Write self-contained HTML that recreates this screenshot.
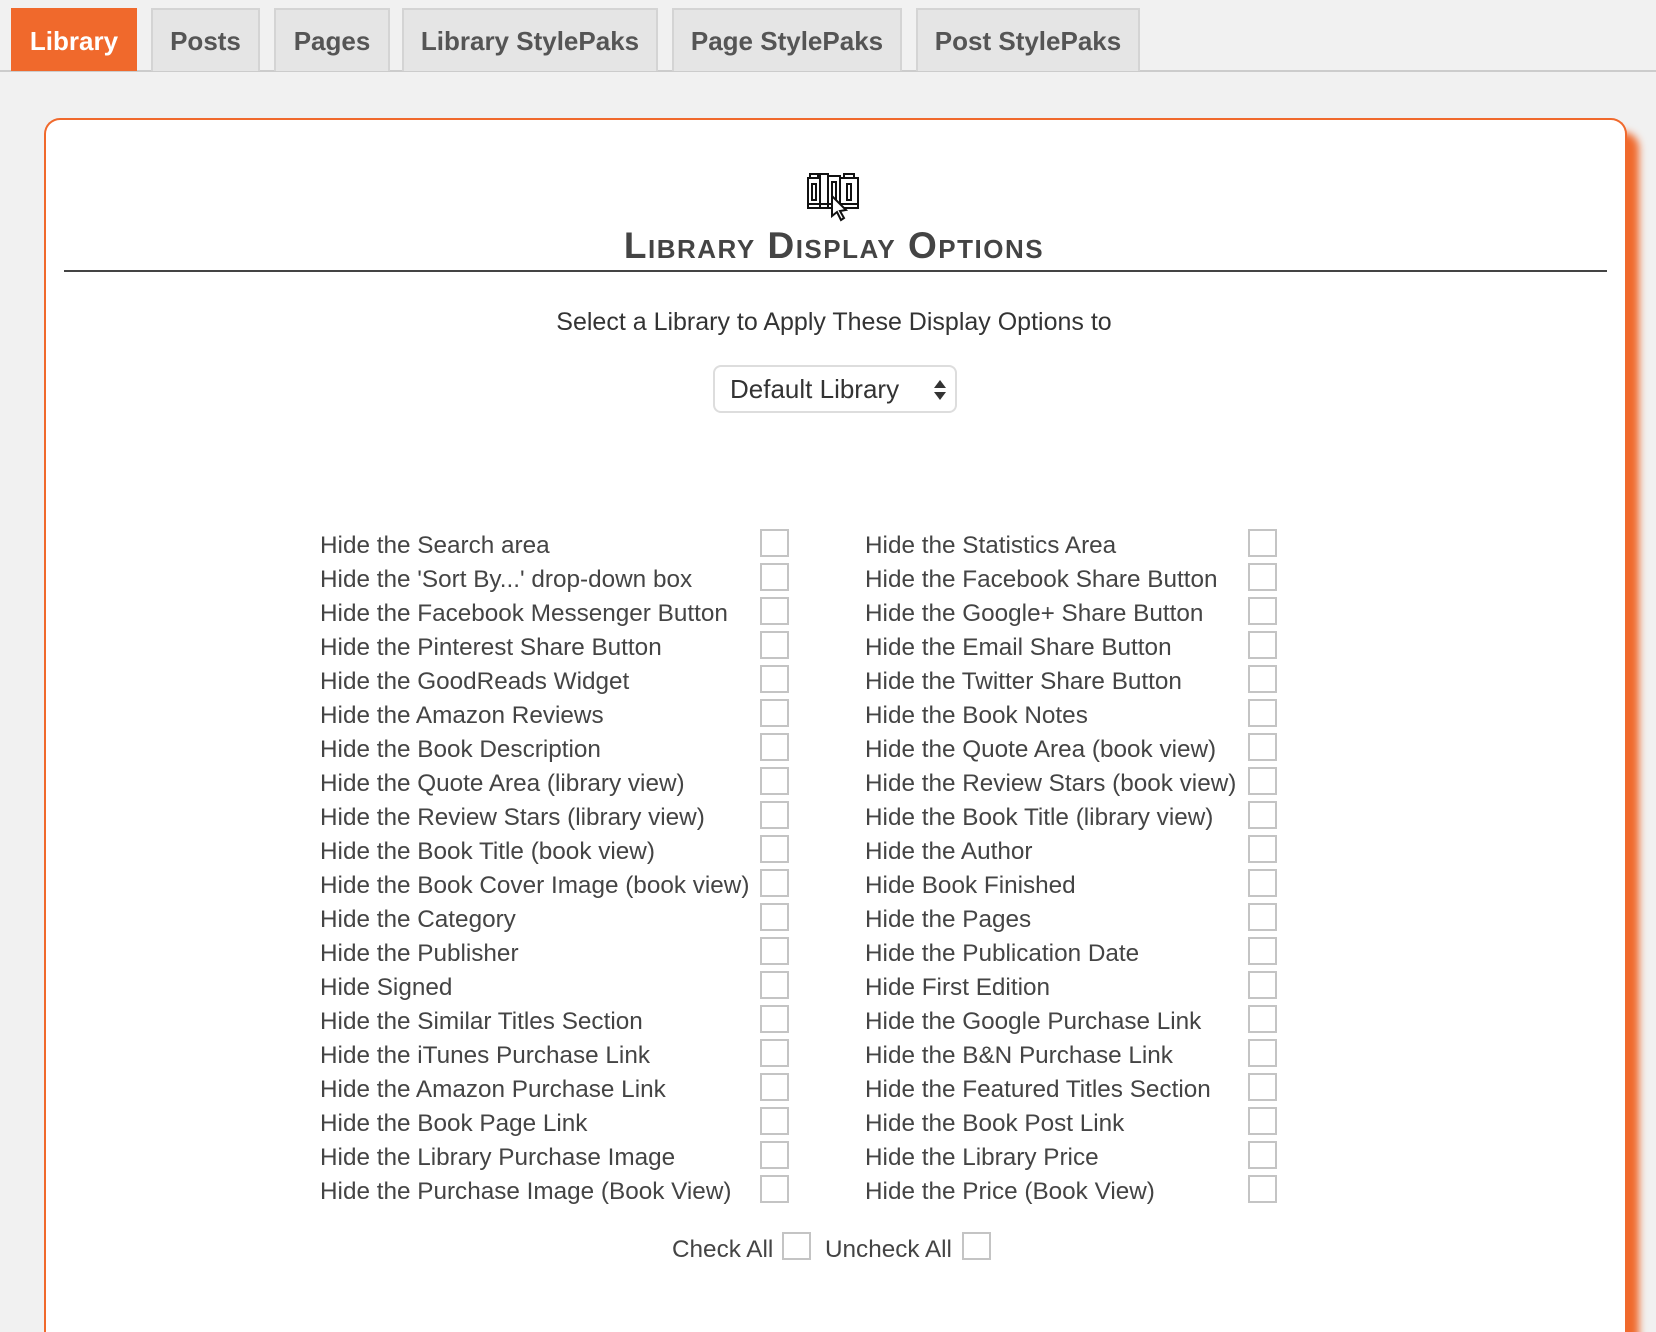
<!DOCTYPE html>
<html style="width:1656px;height:1332px;overflow:hidden"><head><meta charset="utf-8"><style>
*{margin:0;padding:0;box-sizing:border-box}
body{width:1656px;height:1332px;background:#f1f1f1;font-family:"Liberation Sans",Helvetica,Arial,sans-serif;color:#444;position:relative;overflow:hidden}
.tabline{position:absolute;left:0;top:70px;width:1656px;height:2px;background:#ccc}
.tab{position:absolute;top:8px;height:63px;background:#e5e5e5;border:2px solid #d4d4d4;border-bottom:none;font-weight:bold;font-size:26px;color:#555;text-align:center;line-height:63px}
.tab.act{background:#f0692c;border-color:#f0692c;color:#fff}
.panel{position:absolute;left:44px;top:118px;width:1583px;height:1214px;background:#fff;border:2px solid #f0692c;border-bottom:none;border-radius:16px 16px 0 0;box-shadow:12px 14px 8px #f0692c}
.title{position:absolute;left:0;width:1668px;top:225px;text-align:center;font-size:37px;font-weight:bold;font-variant:small-caps;letter-spacing:1.5px;color:#444}
.hr{position:absolute;left:64px;top:270px;width:1543px;height:2px;background:#444}
.sub{position:absolute;left:0;width:1668px;top:308px;text-align:center;font-size:25px;color:#333}
.sel{position:absolute;left:713px;top:365px;width:244px;height:48px;border:2px solid #ddd;border-radius:8px;font-size:26px;color:#333;padding-left:15px;line-height:44px}
.lbl{position:absolute;font-size:24.3px;color:#444;line-height:34px;white-space:nowrap}
.cb{position:absolute;width:29px;height:28px;border:2px solid #c4c4c4;background:#fff}
</style></head><body>
<div class="tabline"></div>
<div class="tab act" style="left:11px;width:126px">Library</div>
<div class="tab" style="left:151px;width:109px">Posts</div>
<div class="tab" style="left:274px;width:116px">Pages</div>
<div class="tab" style="left:402px;width:256px">Library StylePaks</div>
<div class="tab" style="left:672px;width:230px">Page StylePaks</div>
<div class="tab" style="left:916px;width:224px">Post StylePaks</div>
<div class="panel"></div>
<svg style="position:absolute;left:806px;top:170px" width="56" height="52" viewBox="0 0 56 52" fill="none" stroke="#111" stroke-width="2">
<rect x="2" y="8" width="12" height="30"/><rect x="4" y="4" width="8" height="4"/><rect x="6" y="14" width="4" height="16"/>
<rect x="14" y="4" width="8" height="34"/>
<rect x="22" y="6" width="12" height="32"/><rect x="26" y="12" width="4" height="18"/>
<rect x="34" y="8" width="18" height="30"/><rect x="38" y="4" width="10" height="4"/><rect x="41" y="14" width="4" height="16"/>
<line x1="2" y1="34" x2="52" y2="34"/>
<path d="M26 26 L26 46 L31 42 L35 50 L38 48 L34 41 L40 40 Z" fill="#fff"/>
</svg>
<div class="title">Library Display Options</div>
<div class="hr"></div>
<div class="sub">Select a Library to Apply These Display Options to</div>
<div class="sel">Default Library<svg style="position:absolute;right:8px;top:12px" width="14" height="22"><path d="M7 1 L13 9 L1 9 Z M1 13 L13 13 L7 21 Z" fill="#333"/></svg></div>
<div id="rows"></div>
<script>
var L=["Hide the Search area","Hide the 'Sort By...' drop-down box","Hide the Facebook Messenger Button","Hide the Pinterest Share Button","Hide the GoodReads Widget","Hide the Amazon Reviews","Hide the Book Description","Hide the Quote Area (library view)","Hide the Review Stars (library view)","Hide the Book Title (book view)","Hide the Book Cover Image (book view)","Hide the Category","Hide the Publisher","Hide Signed","Hide the Similar Titles Section","Hide the iTunes Purchase Link","Hide the Amazon Purchase Link","Hide the Book Page Link","Hide the Library Purchase Image","Hide the Purchase Image (Book View)"];
var R=["Hide the Statistics Area","Hide the Facebook Share Button","Hide the Google+ Share Button","Hide the Email Share Button","Hide the Twitter Share Button","Hide the Book Notes","Hide the Quote Area (book view)","Hide the Review Stars (book view)","Hide the Book Title (library view)","Hide the Author","Hide Book Finished","Hide the Pages","Hide the Publication Date","Hide First Edition","Hide the Google Purchase Link","Hide the B&amp;N Purchase Link","Hide the Featured Titles Section","Hide the Book Post Link","Hide the Library Price","Hide the Price (Book View)"];
var h="";
for(var i=0;i<20;i++){var c=546+i*34;
h+='<div class="lbl" style="left:320px;top:'+(c-17)+'px">'+L[i]+'</div><div class="cb" style="left:760px;top:'+(c-17)+'px"></div>';
h+='<div class="lbl" style="left:865px;top:'+(c-17)+'px">'+R[i]+'</div><div class="cb" style="left:1248px;top:'+(c-17)+'px"></div>';}
document.getElementById("rows").innerHTML=h;
</script>
<div class="lbl" style="left:672px;top:1233px">Check All</div><div class="cb" style="left:782px;top:1232px"></div>
<div class="lbl" style="left:825px;top:1233px">Uncheck All</div><div class="cb" style="left:962px;top:1232px"></div>
</body></html>
